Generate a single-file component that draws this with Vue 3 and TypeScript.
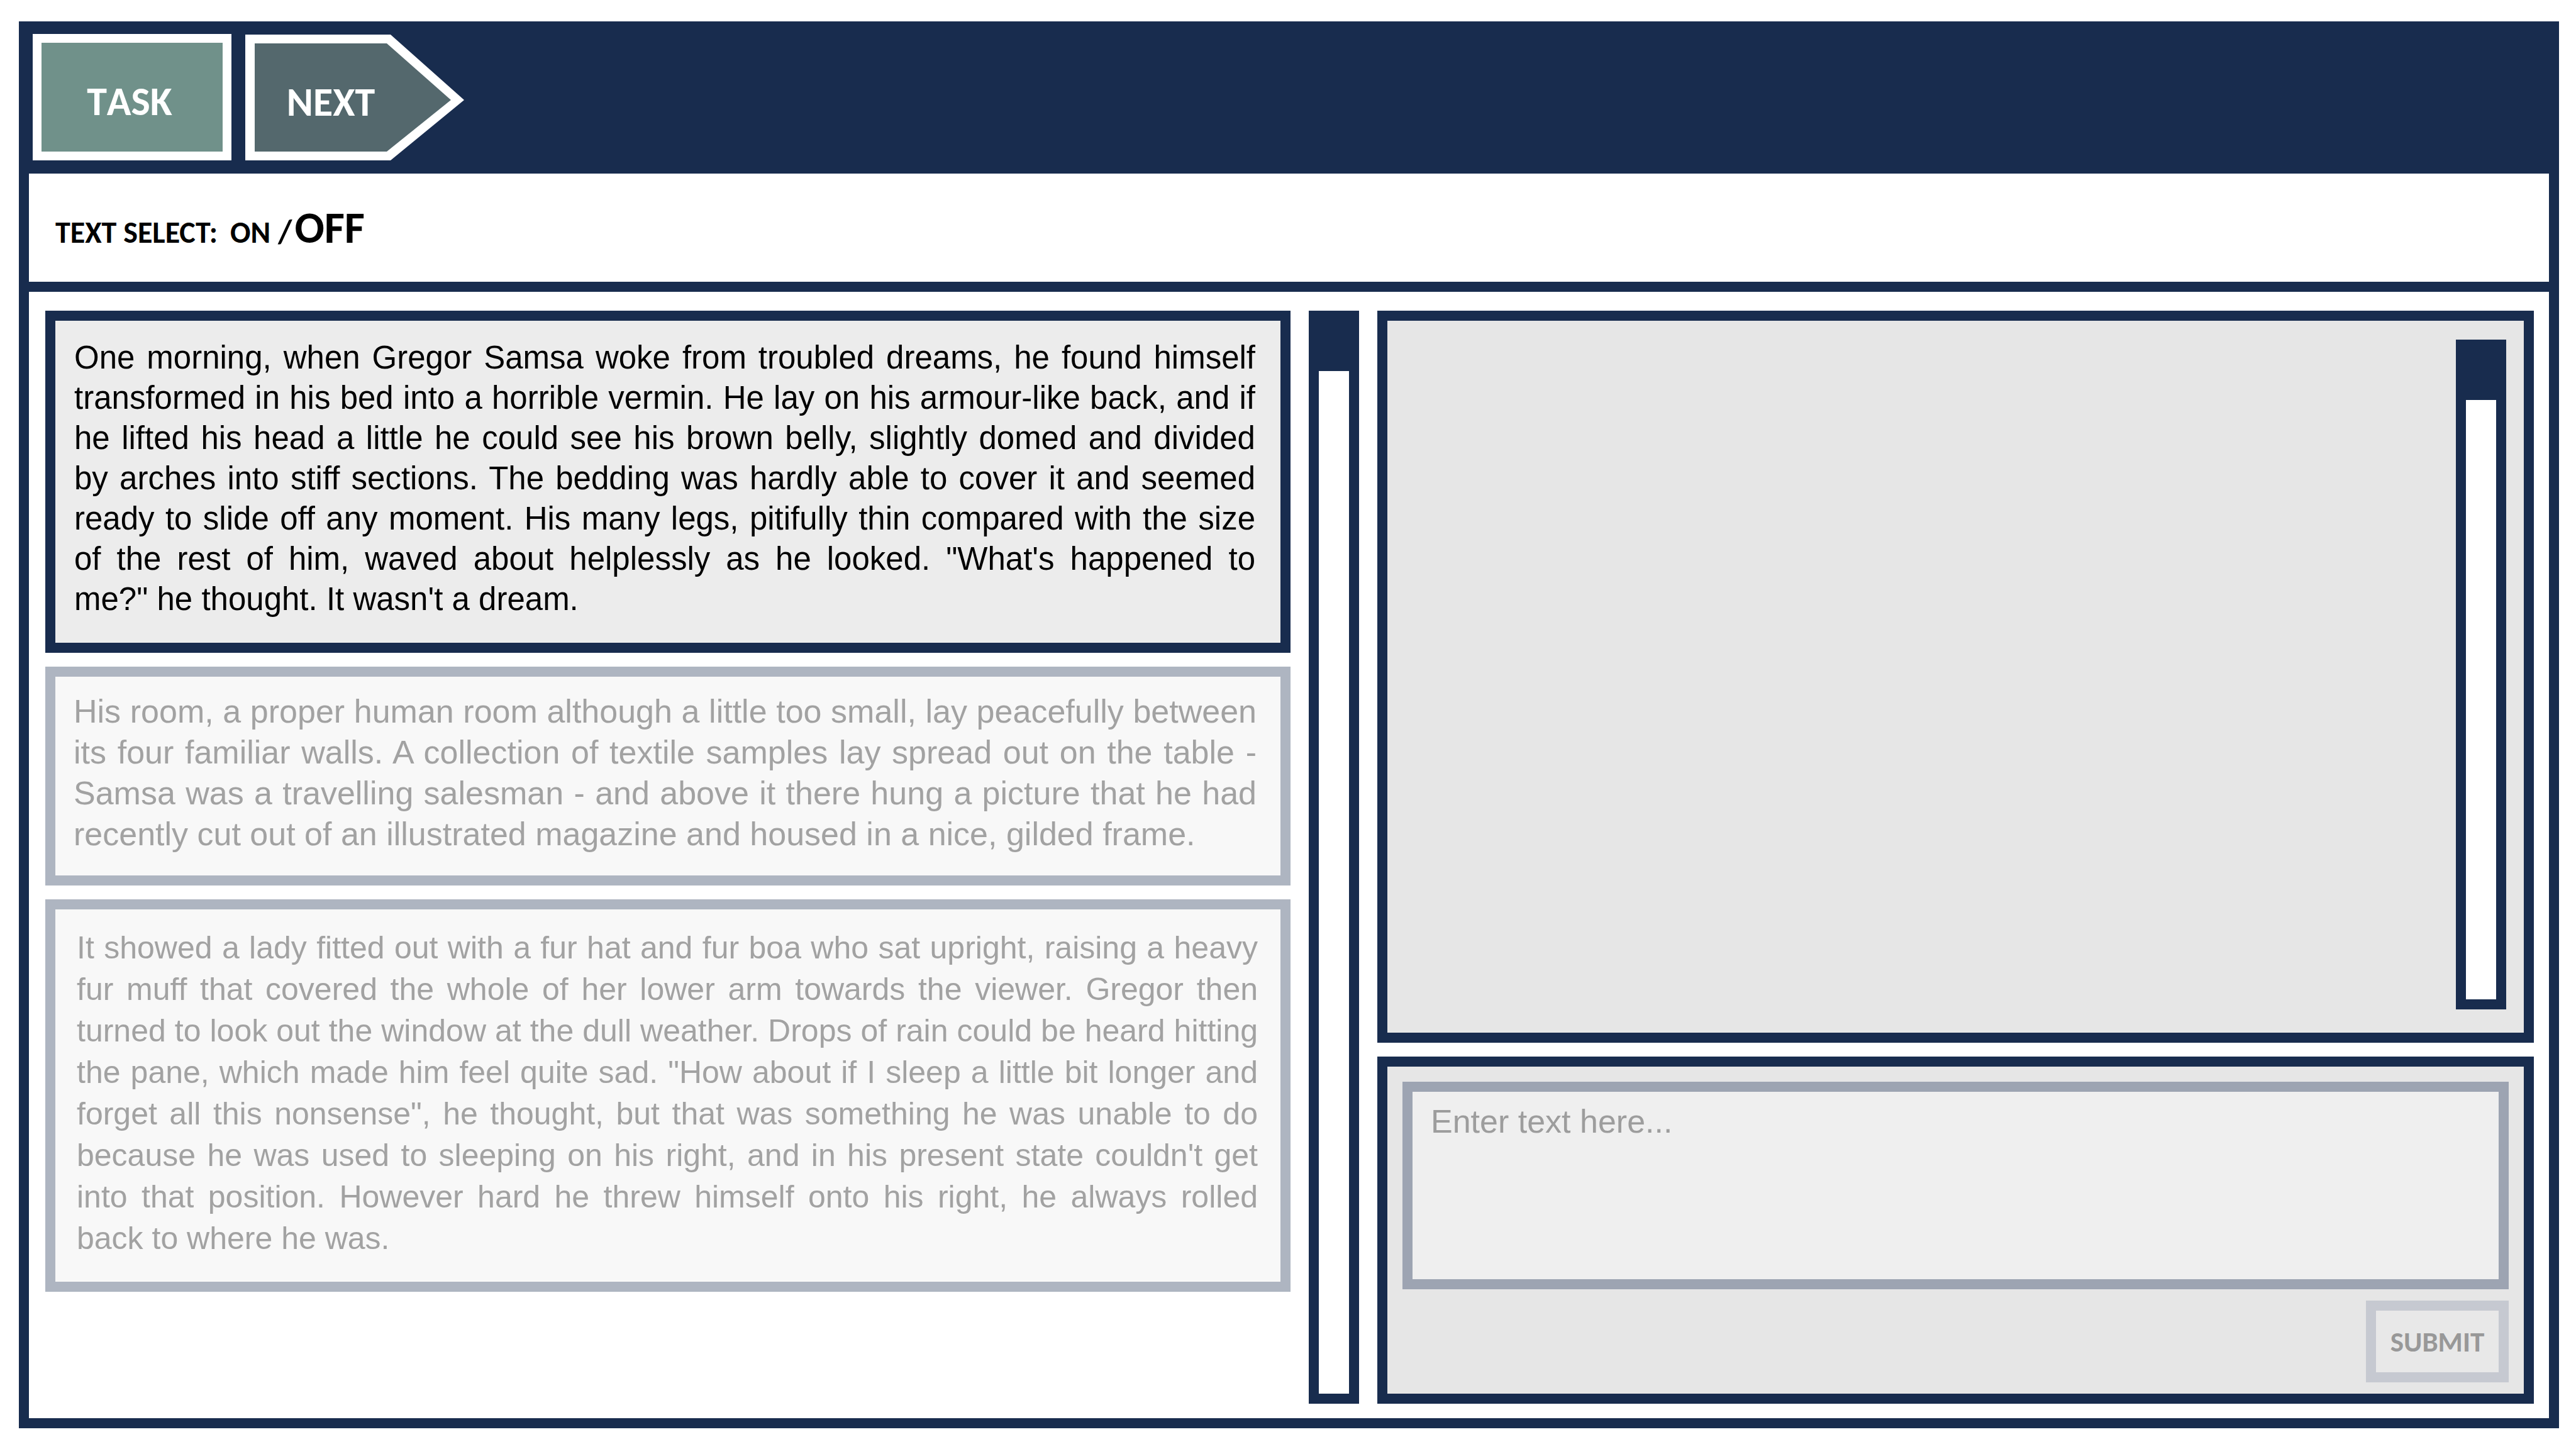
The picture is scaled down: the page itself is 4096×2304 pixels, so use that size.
<script setup lang="ts">
import { ref } from 'vue'

interface Passage {
  id: number
  text: string
  state: 'active' | 'faded' | 'faded small'
}

const passages: Passage[] = [
  {
    id: 1,
    state: 'active',
    text: `One morning, when Gregor Samsa woke from troubled dreams, he found himself transformed in his bed into a horrible vermin. He lay on his armour-like back, and if he lifted his head a little he could see his brown belly, slightly domed and divided by arches into stiff sections. The bedding was hardly able to cover it and seemed ready to slide off any moment. His many legs, pitifully thin compared with the size of the rest of him, waved about helplessly as he looked. "What's happened to me?"\u00a0he thought. It wasn't a dream.`,
  },
  {
    id: 2,
    state: 'faded',
    text: `His room, a proper human room although a little too small, lay peacefully between its four familiar walls. A collection of textile samples lay spread out on the table - Samsa was a travelling salesman - and above it there hung a picture that he had recently cut out of an illustrated magazine and housed in a nice, gilded frame.`,
  },
  {
    id: 3,
    state: 'faded small',
    text: `It showed a lady fitted out with a fur hat and fur boa who sat upright, raising a heavy fur muff that covered the whole of her lower arm towards the viewer. Gregor then turned to look out the window at the dull weather. Drops of rain could be heard hitting the pane, which made him feel quite sad. "How about if I sleep a little bit longer and forget all this nonsense", he thought, but that was something he was unable to do because he was used to sleeping on his right, and in his present state couldn't get into that position. However hard he threw himself onto his right, he always rolled back to where he was.`,
  },
]

const textSelect = ref(false)
const answer = ref('')
</script>

<template>
  <div class="page">
    <div class="frame">
      <header class="topbar">
        <button type="button" class="task">TASK</button>
        <button type="button" class="next">
          <svg class="arrow" viewBox="0 0 348 201" aria-hidden="true">
            <path d="M0 1H231L348 105L231 201H0Z" fill="#fff" />
            <path d="M15 15H225L327 105L225 187H15Z" fill="#54686d" />
          </svg>
          <span class="next-label">NEXT</span>
        </button>
      </header>

      <div class="toolbar">
        <span class="caption">TEXT SELECT:</span>
        <button type="button" class="choice" :class="{ chosen: textSelect }" @click="textSelect = true">ON</button>
        <span class="slash">/</span>
        <button type="button" class="choice" :class="{ chosen: !textSelect }" @click="textSelect = false">OFF</button>
      </div>

      <main class="workspace">
        <section class="passages">
          <article v-for="p in passages" :key="p.id" class="passage" :class="p.state">
            <p>{{ p.text }}</p>
          </article>
        </section>

        <div class="scrollbar"><div class="thumb"></div></div>

        <section class="side">
          <div class="panel log">
            <div class="scrollbar"><div class="thumb"></div></div>
          </div>
          <form class="panel entry" @submit.prevent>
            <textarea v-model="answer" aria-label="Enter text here" placeholder="Enter text here..."></textarea>
            <button type="submit" class="submit">SUBMIT</button>
          </form>
        </section>
      </main>
    </div>
  </div>
</template>

<style>
body {
  margin: 0;
  background: #fff;
}
</style>

<style scoped>
* {
  box-sizing: border-box;
}

.page {
  min-height: 100vh;
  padding: 34px 27px 33px 30px;
  display: flex;
  background: #fff;
  font-family: "Liberation Sans", Arial, sans-serif;
}

button {
  margin: 0;
  padding: 0;
  border: 0;
  background: none;
  color: inherit;
  font-family: Carlito, Calibri, Lato, sans-serif;
  font-weight: 700;
  font-kerning: none;
  cursor: pointer;
}

.frame {
  flex: 1;
  display: flex;
  flex-direction: column;
  border: 16px solid #182c4e;
  border-top: 0;
}

.topbar {
  display: flex;
  gap: 22px;
  padding: 20px 6px 21px;
  background: #182c4e;
}

.task {
  width: 316px;
  height: 201px;
  padding: 12px 8px 0 0;
  border: 14px solid #fff;
  background: #70918a;
  color: #fff;
  font-size: 64px;
}

.next {
  position: relative;
  width: 348px;
  height: 201px;
  padding: 14px 76px 0 0;
  color: #fff;
  font-size: 64px;
}

.arrow {
  position: absolute;
  inset: 0;
  width: 100%;
  height: 100%;
}

.next-label {
  position: relative;
}

.toolbar {
  display: flex;
  align-items: baseline;
  height: 188px;
  padding: 43px 42px 0;
  border-bottom: 16px solid #182c4e;
  color: #000;
  font-family: Carlito, Calibri, Lato, sans-serif;
  font-size: 48px;
  font-weight: 700;
  line-height: 80px;
}

.choice {
  margin-left: 20px;
  font-size: 48px;
}

.slash {
  margin-left: 12px;
  font-size: 52px;
}

.chosen {
  margin-left: 4px;
  font-size: 70px;
}

.workspace {
  flex: 1;
  display: grid;
  grid-template-columns: 1980fr 80px 1839fr;
  column-gap: 29px;
  padding: 30px 24px 23px 26px;
}

.passages {
  display: flex;
  flex-direction: column;
  gap: 22px;
}

.passage {
  border: 16px solid #aeb5c1;
  background: #f8f8f8;
  color: #a2a2a2;
  font-size: 52px;
  text-align: justify;
}

.passage p {
  margin: 0;
}

.active {
  padding: 27px 40px 37px 30px;
  border-color: #182c4e;
  background: #ececec;
  color: #000;
  font-size: 51px;
  line-height: 64px;
}

.faded {
  padding: 23px 38px 33px 29px;
  line-height: 65px;
}

.small {
  padding: 28px 36px 36px 34px;
  font-size: 50px;
  line-height: 66px;
}

.scrollbar {
  width: 80px;
  border: 16px solid #182c4e;
  background: #fff;
}

.thumb {
  height: 80px;
  background: #182c4e;
}

.side {
  display: flex;
  flex-direction: column;
  gap: 22px;
}

.panel {
  border: 16px solid #182c4e;
  background: #e6e6e6;
}

.log {
  flex: 1;
  display: flex;
  justify-content: flex-end;
  padding: 30px 28px 37px;
}

.entry {
  display: flex;
  flex-direction: column;
  align-items: flex-end;
  gap: 18px;
  padding: 24px 24px 18px;
}

textarea {
  display: block;
  width: 100%;
  height: 330px;
  padding: 18px 29px;
  border: 16px solid #9da4b2;
  border-radius: 0;
  background: #efefef;
  color: #000;
  font-family: inherit;
  font-size: 52px;
  line-height: 58px;
  resize: none;
}

textarea::placeholder {
  color: #9d9d9d;
  opacity: 1;
}

.submit {
  width: 227px;
  height: 130px;
  border: 16px solid #c6c9d1;
  background: #e8e8e8;
  color: #989898;
  font-size: 45px;
}
</style>
